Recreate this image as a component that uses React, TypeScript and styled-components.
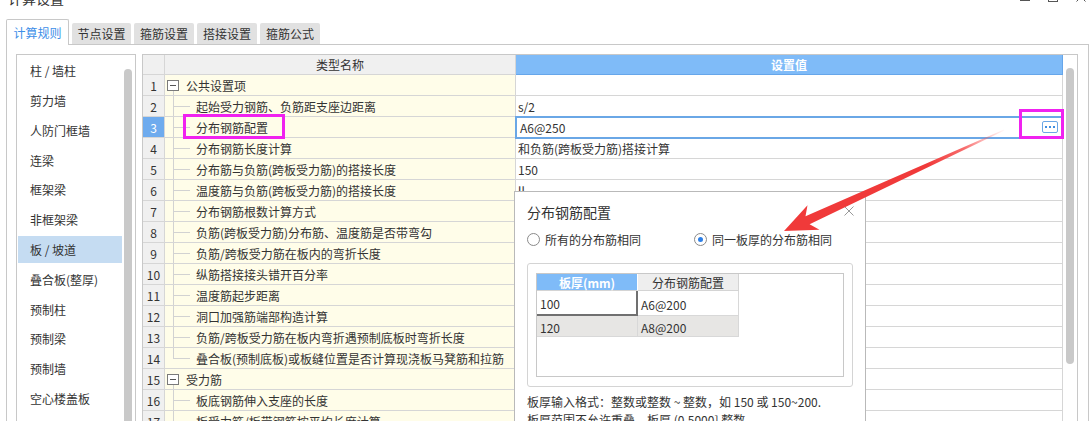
import styled, { createGlobalStyle, css } from 'styled-components';

const GlobalStyle = createGlobalStyle`
  html, body {
    margin: 0;
    padding: 0;
    background: #fff;
  }
  body {
    width: 1089px;
    height: 421px;
    overflow: hidden;
    font-family: "Noto Sans CJK SC", "Noto Sans", sans-serif;
    font-size: 12px;
    color: #333;
  }
  * {
    box-sizing: border-box;
  }
`;

const Page = styled.div`
	position: relative;
	width: 1089px;
	height: 421px;
	overflow: hidden;
`;

const TitleBar = styled.div`
	height: 19px;
	display: flex;
	align-items: flex-start;
	padding: 0 3px 0 8px;
	overflow: hidden;
`;

const Title = styled.div`
	font-size: 14px;
	line-height: 14px;
	margin-top: -9px;
	color: #333;
`;

const WinButtons = styled.div`
	margin-left: auto;
	display: flex;
	gap: 18px;
	margin-top: -8px;
`;

const WinMin = styled.span`
	width: 10px;
	height: 10px;
	border-bottom: 1px solid #555;
	margin-top: -1px;
`;

const WinMax = styled.span`
	width: 10px;
	height: 10px;
	border: 1px solid #555;
`;

const WinClose = styled.svg`
	width: 10px;
	height: 10px;
`;

const TabBar = styled.div`
	display: flex;
	align-items: flex-end;
	gap: 3px;
	height: 25px;
	padding-left: 6px;
`;

const Tab = styled.div<{ $active?: boolean; $w: number }>`
	width: ${(p) => p.$w}px;
	height: 21px;
	background: #e1e1e1;
	color: #333;
	display: flex;
	align-items: center;
	justify-content: center;
	border-radius: 2px 2px 0 0;
	${(p) =>
		p.$active &&
		css`
			height: 26px;
			margin-bottom: -1px;
			padding-bottom: 1px;
			background: #fff;
			color: #3d8ee8;
			border: 1px solid #c8c8c8;
			border-bottom: none;
			position: relative;
			z-index: 1;
		`}
`;

const Panel = styled.div`
	margin-left: 6px;
	width: 1083px;
	height: 400px;
	border: 1px solid #c8c8c8;
	padding: 9px 10px 0 9px;
	display: flex;
	gap: 6px;
`;

const SideList = styled.div`
	width: 120px;
	height: 390px;
	border: 1px solid #c8c8c8;
	padding: 1px 0 0 1px;
	display: flex;
`;

const SideItems = styled.div`
	width: 104px;
	display: flex;
	flex-direction: column;
`;

const SideItem = styled.div<{ $active?: boolean }>`
	height: 28px;
	margin: 1px 0;
	padding-left: 12px;
	display: flex;
	align-items: center;
	white-space: nowrap;
	color: #333;
	background: ${(p) => (p.$active ? '#c5dcf2' : 'transparent')};
`;

const ScrollTrack = styled.div<{ $w: number; $pad: number }>`
	width: ${(p) => p.$w}px;
	padding-left: ${(p) => p.$pad}px;
	padding-top: 13px;
`;

const ScrollThumb = styled.div<{ $h: number }>`
	width: 8px;
	height: ${(p) => p.$h}px;
	border-radius: 4px;
	background: #c9c9c9;
`;

const Grid = styled.div`
	width: 936px;
	height: 390px;
	border: 1px solid #c8c8c8;
	display: flex;
`;

const Table = styled.div`
	width: 920px;
	display: grid;
	grid-template-columns: 22px 351px 547px;
	grid-template-rows: 20px;
	grid-auto-rows: 21px;
	align-content: start;
`;

const Cell = styled.div`
	border-right: 1px solid #d6d6d6;
	border-bottom: 1px solid #d6d6d6;
	display: flex;
	align-items: center;
	white-space: nowrap;
	overflow: hidden;
`;

const HeadCell = styled(Cell)<{ $blue?: boolean }>`
	justify-content: center;
	background: #f0f0f0;
	color: #333;
	${(p) =>
		p.$blue &&
		css`
			background: #7fbbf8;
			border: 1px solid #66a6ea;
			border-left: none;
			border-top: none;
			color: #fff;
			font-weight: bold;
		`}
`;

const NumCell = styled(Cell)<{ $active?: boolean }>`
	justify-content: center;
	background: ${(p) => (p.$active ? '#6eabee' : '#f0f0f0')};
	color: ${(p) => (p.$active ? '#fff' : '#333')};
`;

const NameCell = styled(Cell)<{ $group?: boolean }>`
	background: #fffde9;
	color: #333;
	${(p) =>
		p.$group &&
		css`
			background: linear-gradient(#d2d2d2, #d2d2d2) 8px 15px / 1px 6px no-repeat, #fffde9;
		`}
`;

const Toggle = styled.span`
	width: 12px;
	height: 11px;
	margin: 0 7px 0 2px;
	border: 1px solid #7a7a7a;
	background: linear-gradient(#555, #555) center / 6px 1px no-repeat, #fff;
`;

const Branch = styled.span<{ $last?: boolean }>`
	align-self: stretch;
	width: 17px;
	margin: 0 6px 0 8px;
	background: linear-gradient(#d2d2d2, #d2d2d2) left top / 1px ${(p) => (p.$last ? '50%' : '100%')} no-repeat,
		linear-gradient(#d2d2d2, #d2d2d2) left center / 100% 1px no-repeat;
`;

const ValueCell = styled(Cell)<{ $active?: boolean }>`
	background: #fff;
	padding-left: ${(p) => (p.$active ? 4 : 2)}px;
	color: #333;
	${(p) =>
		p.$active &&
		css`
			outline: 2px solid #6aa7e6;
			outline-offset: -1px;
			position: relative;
			z-index: 1;
		`}
`;

const EllipsisButton = styled.span`
	margin-left: auto;
	margin-right: 4px;
	width: 16px;
	height: 12px;
	border: 1px solid #6aa7e6;
	border-radius: 2px;
	display: flex;
	align-items: center;
	justify-content: center;
	gap: 2px;
	& > i {
		width: 2px;
		height: 2px;
		background: #3f8ee0;
	}
`;

const Dialog = styled.div`
	position: absolute;
	left: 514px;
	top: 191px;
	width: 352px;
	height: 260px;
	background: #fff;
	border: 1px solid #b9b9b9;
	padding: 10px 12px 0 12px;
	z-index: 5;
`;

const DialogHeader = styled.div`
	height: 20px;
	display: flex;
	align-items: center;
	font-size: 14px;
	color: #333;
`;

const CloseIcon = styled.svg`
	margin-left: auto;
	margin-right: -1px;
	width: 10px;
	height: 10px;
	margin-top: -3px;
`;

const RadioRow = styled.div`
	margin-top: 9px;
	height: 16px;
	display: flex;
	align-items: center;
`;

const RadioLabel = styled.label<{ $w?: number }>`
	display: flex;
	align-items: center;
	gap: 5px;
	width: ${(p) => (p.$w ? `${p.$w}px` : 'auto')};
	color: #333;
`;

const RadioDot = styled.span<{ $checked?: boolean }>`
	width: 13px;
	height: 13px;
	border-radius: 50%;
	border: 1px solid #8a8a8a;
	background: #fff;
	display: flex;
	align-items: center;
	justify-content: center;
	&::after {
		content: '';
		width: 5px;
		height: 5px;
		border-radius: 50%;
		background: ${(p) => (p.$checked ? '#2d7fe6' : 'transparent')};
	}
`;

const GroupBox = styled.div`
	margin-top: 16px;
	width: 326px;
	height: 124px;
	border: 1px solid #d4d4d4;
	border-radius: 3px;
	padding: 9px 8px;
`;

const InnerTable = styled.div`
	width: 308px;
	height: 104px;
	border: 1px solid #c8c8c8;
	background: #fff;
	display: grid;
	grid-template-columns: 101px 101px;
	grid-template-rows: 17px 25px 21px;
	align-content: start;
`;

const ThCell = styled.div<{ $blue?: boolean }>`
	display: flex;
	align-items: center;
	justify-content: center;
	background: ${(p) => (p.$blue ? '#7fbbf8' : '#eeeeee')};
	color: ${(p) => (p.$blue ? '#fff' : '#333')};
	font-weight: ${(p) => (p.$blue ? 'bold' : 'normal')};
	border-right: 1px solid ${(p) => (p.$blue ? '#fff' : '#d4d4d4')};
	border-bottom: 1px solid #d4d4d4;
`;

const TdCell = styled.div<{ $editing?: boolean; $shade?: boolean }>`
	display: flex;
	align-items: center;
	padding-left: 3px;
	padding-top: 2px;
	color: #333;
	background: ${(p) => (p.$shade ? '#e7e6e4' : '#fff')};
	border-right: 1px solid #d8d8d8;
	border-bottom: 1px solid #d8d8d8;
	${(p) =>
		p.$editing &&
		css`
			border: 2px solid #707070;
			border-top: none;
			border-left: none;
		`}
`;

const HelpText = styled.div`
	margin-top: 6px;
	line-height: 18px;
	color: #333;
	white-space: nowrap;
`;

const Overlay = styled.svg`
	position: absolute;
	left: 0;
	top: 0;
	width: 1089px;
	height: 421px;
	pointer-events: none;
	z-index: 10;
`;

const sideItems = [
	'柱 / 墙柱',
	'剪力墙',
	'人防门框墙',
	'连梁',
	'框架梁',
	'非框架梁',
	'板 / 坡道',
	'叠合板(整厚)',
	'预制柱',
	'预制梁',
	'预制墙',
	'空心楼盖板',
	'楼梯',
];

type Row = { name: string; value?: string; group?: boolean; last?: boolean };

const rows: Row[] = [
	{ name: '公共设置项', group: true },
	{ name: '起始受力钢筋、负筋距支座边距离', value: 's/2' },
	{ name: '分布钢筋配置', value: 'A6@250' },
	{ name: '分布钢筋长度计算', value: '和负筋(跨板受力筋)搭接计算' },
	{ name: '分布筋与负筋(跨板受力筋)的搭接长度', value: '150' },
	{ name: '温度筋与负筋(跨板受力筋)的搭接长度', value: 'll' },
	{ name: '分布钢筋根数计算方式' },
	{ name: '负筋(跨板受力筋)分布筋、温度筋是否带弯勾' },
	{ name: '负筋/跨板受力筋在板内的弯折长度' },
	{ name: '纵筋搭接接头错开百分率' },
	{ name: '温度筋起步距离' },
	{ name: '洞口加强筋端部构造计算' },
	{ name: '负筋/跨板受力筋在板内弯折遇预制底板时弯折长度' },
	{ name: '叠合板(预制底板)或板缝位置是否计算现浇板马凳筋和拉筋', last: true },
	{ name: '受力筋', group: true },
	{ name: '板底钢筋伸入支座的长度' },
	{ name: '板受力筋/板带钢筋按平均长度计算' },
	{ name: '' },
];

const tabs = [
	{ label: '计算规则', w: 63 },
	{ label: '节点设置', w: 59 },
	{ label: '箍筋设置', w: 60 },
	{ label: '搭接设置', w: 60 },
	{ label: '箍筋公式', w: 60 },
];

const App = () => {
	return (
		<Page>
			<GlobalStyle />
			<TitleBar>
				<Title>计算设置</Title>
				<WinButtons>
					<WinMin />
					<WinMax />
					<WinClose viewBox="0 0 10 10">
						<path d="M0.5 0.5 L9.5 9.5 M9.5 0.5 L0.5 9.5" stroke="#555" strokeWidth="1" />
					</WinClose>
				</WinButtons>
			</TitleBar>
			<TabBar>
				{tabs.map((t, i) => (
					<Tab key={t.label} $w={t.w} $active={i === 0}>
						{t.label}
					</Tab>
				))}
			</TabBar>
			<Panel>
				<SideList>
					<SideItems>
						{sideItems.map((s) => (
							<SideItem key={s} $active={s === '板 / 坡道'}>
								{s}
							</SideItem>
						))}
					</SideItems>
					<ScrollTrack $w={13} $pad={2}>
						<ScrollThumb $h={400} />
					</ScrollTrack>
				</SideList>
				<Grid>
					<Table>
						<HeadCell />
						<HeadCell>类型名称</HeadCell>
						<HeadCell $blue>设置值</HeadCell>
						{rows.map((r, i) => {
							const active = i === 2;
							return [
								<NumCell key={`n${i}`} $active={active}>
									{i + 1}
								</NumCell>,
								<NameCell key={`t${i}`} $group={r.group}>
									{r.group ? <Toggle /> : <Branch $last={r.last} />}
									{r.name}
								</NameCell>,
								<ValueCell key={`v${i}`} $active={active}>
									{r.value}
									{active && (
										<EllipsisButton>
											<i />
											<i />
											<i />
										</EllipsisButton>
									)}
								</ValueCell>,
							];
						})}
					</Table>
					<ScrollTrack $w={14} $pad={3}>
						<ScrollThumb $h={296} />
					</ScrollTrack>
				</Grid>
			</Panel>

			<Dialog>
				<DialogHeader>
					分布钢筋配置
					<CloseIcon viewBox="0 0 10 10">
						<path d="M0.5 0.5 L9.5 9.5 M9.5 0.5 L0.5 9.5" stroke="#999" strokeWidth="1" />
					</CloseIcon>
				</DialogHeader>
				<RadioRow>
					<RadioLabel $w={167}>
						<RadioDot />
						所有的分布筋相同
					</RadioLabel>
					<RadioLabel>
						<RadioDot $checked />
						同一板厚的分布筋相同
					</RadioLabel>
				</RadioRow>
				<GroupBox>
					<InnerTable>
						<ThCell $blue>板厚(mm)</ThCell>
						<ThCell>分布钢筋配置</ThCell>
						<TdCell $editing>100</TdCell>
						<TdCell>A6@200</TdCell>
						<TdCell $shade>120</TdCell>
						<TdCell $shade>A8@200</TdCell>
					</InnerTable>
				</GroupBox>
				<HelpText>
					板厚输入格式：整数或整数 ~ 整数，如 150 或 150~200.
					<br />
					板厚范围不允许重叠，板厚 (0,5000] 整数
				</HelpText>
			</Dialog>

			<Overlay viewBox="0 0 1089 421">
				<defs>
					<linearGradient id="arrowFade" gradientUnits="userSpaceOnUse" x1="1004" y1="130" x2="784" y2="231">
						<stop offset="0" stopColor="#ff6a6a" stopOpacity="0.05" />
						<stop offset="0.18" stopColor="#f54848" stopOpacity="0.8" />
						<stop offset="0.35" stopColor="#f03a3a" stopOpacity="1" />
						<stop offset="1" stopColor="#f03a3a" stopOpacity="1" />
					</linearGradient>
				</defs>
				<path
					d="M784 231 L807.5 205.2 L805.5 216.3 L1004 129.6 L1004.4 130.5 L809.6 224.2 L819.5 229.7 Z"
					fill="url(#arrowFade)"
				/>
				<rect x="184.5" y="115.5" width="99" height="22" fill="none" stroke="#f022f0" strokeWidth="3" />
				<rect x="1020.5" y="110.5" width="42" height="27" fill="none" stroke="#f022f0" strokeWidth="3" />
			</Overlay>
		</Page>
	);
};

export default App;
